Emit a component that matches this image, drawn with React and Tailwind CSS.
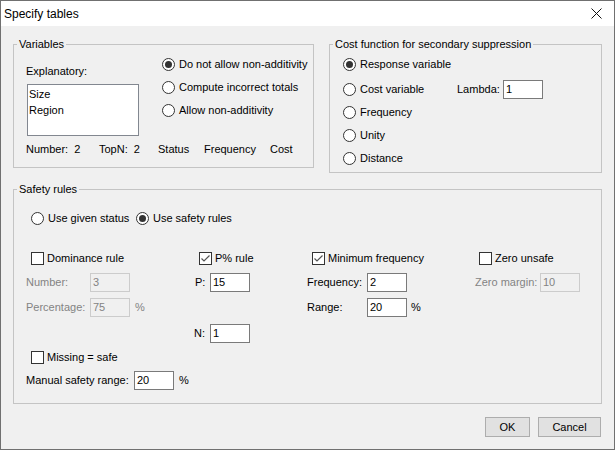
const Radio = ({ checked, label, className = "" }) => (
  <label className={`flex items-center h-[16px] ${className}`}>
    <span className="w-[13px] h-[13px] rounded-full border border-[#333] bg-white flex items-center justify-center shrink-0">
      {checked && <span className="w-[7px] h-[7px] rounded-full bg-[#333]" />}
    </span>
    <span className="ml-[4px] whitespace-nowrap">{label}</span>
  </label>
);

const Check = ({ checked, label, className = "" }) => (
  <label className={`flex items-center h-[16px] ${className}`}>
    <span className="w-[13px] h-[13px] border border-[#333] bg-white flex items-center justify-center shrink-0">
      {checked && (
        <svg width="11" height="11" viewBox="0 0 11 11">
          <polyline points="1.5,5.5 4,8 9.5,2.5" fill="none" stroke="#555" strokeWidth="1.2" />
        </svg>
      )}
    </span>
    <span className="ml-[3px] whitespace-nowrap">{label}</span>
  </label>
);

const Field = ({ value, disabled }) => (
  <div
    className={`w-[40px] h-[19px] border px-[2px] flex items-center leading-none ${
      disabled ? "border-[#cccccc] bg-[#f0f0f0] text-[#838383]" : "border-[#7a7a7a] bg-white text-black"
    }`}
  >
    {value}
  </div>
);

const Group = ({ title, className = "", children }) => (
  <fieldset className={`border border-[#c4c4c4] ${className}`}>
    <legend className="ml-[3px] px-[2px] leading-[14px]">{title}</legend>
    {children}
  </fieldset>
);

export default function App() {
  return (
    <div
      className="w-[615px] h-[450px] border border-[#707070] bg-[#f0f0f0] flex flex-col text-[11px] text-black"
      style={{ fontFamily: '"Liberation Sans", Arial, sans-serif' }}
    >
      {/* TITLE BAR */}
      <div className="h-[25px] bg-white flex items-center justify-between pl-[3px] pr-[12px] shrink-0">
        <span className="text-[12px]">Specify tables</span>
        <svg width="11" height="11" viewBox="0 0 11 11">
          <path d="M0.5 0.5 L10.5 10.5 M10.5 0.5 L0.5 10.5" stroke="#111" strokeWidth="1" />
        </svg>
      </div>

      {/* BODY */}
      <div className="px-[12px] pt-[11px] flex flex-col">
        <div className="flex items-start gap-[15px] h-[136px]">
          <Group title="Variables" className="w-[301px] h-[131px]">
            <div className="pl-[12px]">
              <div className="flex">
                <div className="w-[136px] pt-[13px]">
                  <div className="leading-[14px]">Explanatory:</div>
                  <div className="mt-[6px] ml-[1px] w-[112px] h-[52px] border border-[#828790] bg-white pl-[1px] pt-[1px] leading-[16px]">
                    <div>Size</div>
                    <div>Region</div>
                  </div>
                </div>
                <div className="pt-[5px] flex flex-col gap-[7px]">
                  <Radio checked label="Do not allow non-additivity" />
                  <Radio label="Compute incorrect totals" />
                  <Radio label="Allow non-additivity" />
                </div>
              </div>
              <div className="mt-[6px] flex leading-[14px] whitespace-pre">
                <span className="w-[73px]">Number:  2</span>
                <span className="w-[59px]">TopN:  2</span>
                <span className="w-[46px]">Status</span>
                <span className="w-[66px]">Frequency</span>
                <span>Cost</span>
              </div>
            </div>
          </Group>

          <Group title="Cost function for secondary suppression" className="flex-1 h-[136px]">
            <div className="pl-[13px] pt-[2px] flex flex-col">
              <div className="h-[23px] flex items-center">
                <Radio checked label="Response variable" />
              </div>
              <div className="h-[23px] mt-[2px] flex items-center">
                <Radio label="Cost variable" className="w-[114px]" />
                <span className="w-[46px]">Lambda:</span>
                <Field value="1" />
              </div>
              <div className="h-[23px] flex items-center">
                <Radio label="Frequency" />
              </div>
              <div className="h-[23px] flex items-center">
                <Radio label="Unity" />
              </div>
              <div className="h-[23px] flex items-center">
                <Radio label="Distance" />
              </div>
            </div>
          </Group>
        </div>

        <Group title="Safety rules" className="mt-[9px] h-[222px]">
          <div className="pt-[14px] pl-[17px] flex">
            <Radio label="Use given status" className="w-[105px]" />
            <Radio checked label="Use safety rules" />
          </div>
          <div className="mt-[24px] pl-[12px] flex">
            {/* column 1 */}
            <div className="w-[168px] flex flex-col">
              <Check label="Dominance rule" className="ml-[5px]" />
              <div className="mt-[7px] flex items-center text-[#838383]">
                <span className="w-[64px]">Number:</span>
                <Field value="3" disabled />
              </div>
              <div className="mt-[6px] flex items-center text-[#838383]">
                <span className="w-[64px]">Percentage:</span>
                <Field value="75" disabled />
                <span className="ml-[5px] text-[#838383]">%</span>
              </div>
              <Check label="Missing = safe" className="ml-[5px] mt-[32px]" />
              <div className="mt-[6px] flex items-center">
                <span className="w-[108px]">Manual safety range:</span>
                <Field value="20" />
                <span className="ml-[5px]">%</span>
              </div>
            </div>
            {/* column 2 */}
            <div className="w-[113px] flex flex-col">
              <Check checked label="P% rule" className="ml-[5px]" />
              <div className="mt-[7px] flex items-center">
                <span className="w-[16px] pl-[1px]">P:</span>
                <Field value="15" />
              </div>
              <div className="mt-[32px] flex items-center">
                <span className="w-[16px]">N:</span>
                <Field value="1" />
              </div>
            </div>
            {/* column 3 */}
            <div className="w-[168px] flex flex-col">
              <Check checked label="Minimum frequency" className="ml-[5px]" />
              <div className="mt-[7px] flex items-center">
                <span className="w-[60px]">Frequency:</span>
                <Field value="2" />
              </div>
              <div className="mt-[6px] flex items-center">
                <span className="w-[60px]">Range:</span>
                <Field value="20" />
                <span className="ml-[4px]">%</span>
              </div>
            </div>
            {/* column 4 */}
            <div className="flex flex-col">
              <Check label="Zero unsafe" className="ml-[4px]" />
              <div className="mt-[7px] flex items-center">
                <span className="w-[65px] text-[#838383]">Zero margin:</span>
                <Field value="10" disabled />
              </div>
            </div>
          </div>
        </Group>

        <div className="mt-[13px] flex justify-end gap-[8px] pr-[1px]">
          <button className="w-[45px] h-[20px] border border-[#adadad] bg-[#e1e1e1] leading-none">OK</button>
          <button className="w-[63px] h-[20px] border border-[#adadad] bg-[#e1e1e1] leading-none">Cancel</button>
        </div>
      </div>
    </div>
  );
}
